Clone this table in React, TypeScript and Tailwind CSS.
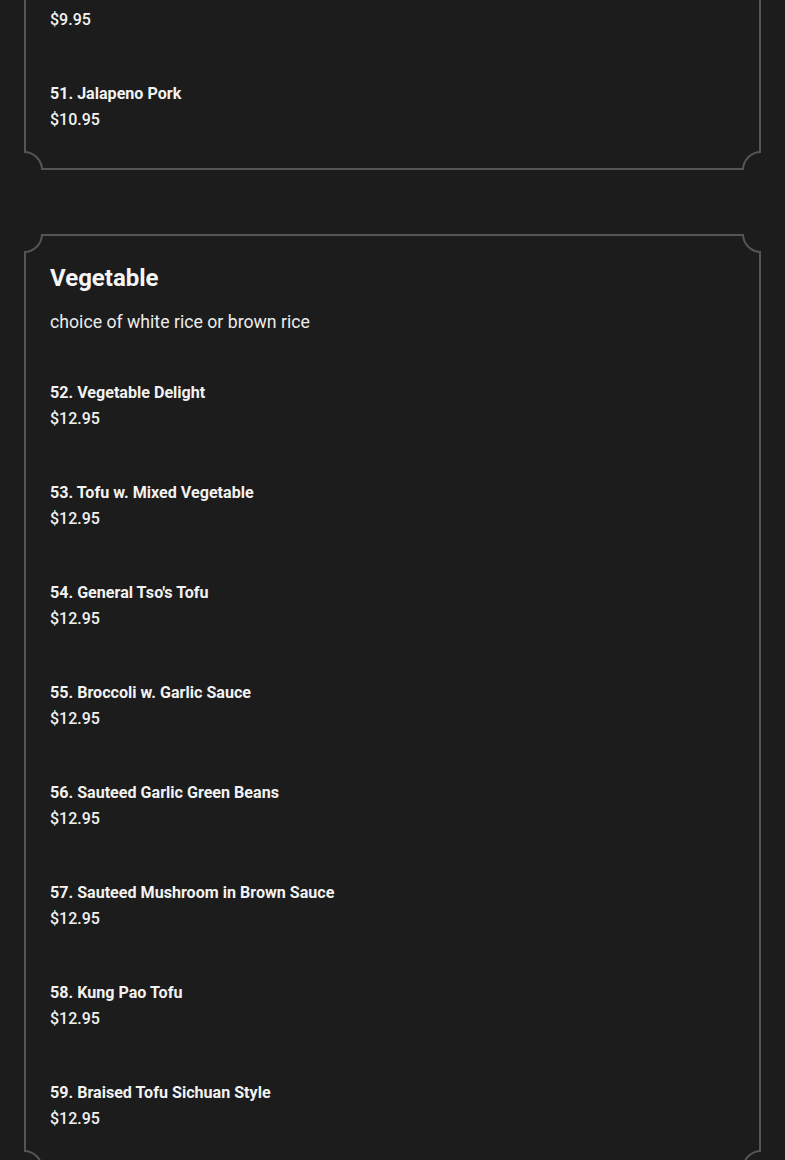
import React from "react";

type Item = { name: string; price: string };

const Corner = ({ pos }: { pos: string }) => (
  <div
    className={`absolute w-[38px] h-[38px] rounded-full border-2 border-[#555555] bg-[#1c1c1c] ${pos}`}
  />
);

const Card = ({
  title,
  desc,
  items,
  className = "",
}: {
  title?: string;
  desc?: string;
  items: Item[];
  className?: string;
}) => (
  <section className={`relative mx-6 overflow-hidden ${className}`}>
    <div
      className={`border-2 border-[#555555] px-6 pb-[11px] ${title ? "pt-[26px]" : "pt-0"}`}
    >
      {title && (
        <h2 className="text-[24px] leading-[32px] font-bold text-[#f5f5f5]">{title}</h2>
      )}
      {desc && (
        <p className="mt-[14px] mb-[20px] text-[17.7px] leading-[28px] text-[#ececec]">{desc}</p>
      )}
      {items.map((it) => (
        <div key={it.name} className="flex flex-col gap-[2px] py-[25px]">
          <div className="text-[16.1px] leading-[24px] font-bold text-[#f2f2f2]">{it.name}</div>
          <div className="text-[16px] leading-[24px] font-medium text-[#f2f2f2]">{it.price}</div>
        </div>
      ))}
    </div>
    <Corner pos="-left-[19px] -top-[19px]" />
    <Corner pos="-right-[19px] -top-[19px]" />
    <Corner pos="-left-[19px] -bottom-[19px]" />
    <Corner pos="-right-[19px] -bottom-[19px]" />
  </section>
);

export default function App() {
  const veg: Item[] = [
    { name: "52. Vegetable Delight", price: "$12.95" },
    { name: "53. Tofu w. Mixed Vegetable", price: "$12.95" },
    { name: "54. General Tso's Tofu", price: "$12.95" },
    { name: "55. Broccoli w. Garlic Sauce", price: "$12.95" },
    { name: "56. Sauteed Garlic Green Beans", price: "$12.95" },
    { name: "57. Sauteed Mushroom in Brown Sauce", price: "$12.95" },
    { name: "58. Kung Pao Tofu", price: "$12.95" },
    { name: "59. Braised Tofu Sichuan Style", price: "$12.95" },
  ];
  return (
    <div
      className="min-h-[1160px] bg-[#1c1c1c] overflow-hidden"
      style={{ fontFamily: "Roboto, 'Noto Sans', sans-serif" }}
    >
      <Card
        className="mt-[-45px]"
        items={[
          { name: "50. Pork w. Broccoli", price: "$9.95" },
          { name: "51. Jalapeno Pork", price: "$10.95" },
        ]}
      />
      <Card
        className="mt-[64px]"
        title="Vegetable"
        desc="choice of white rice or brown rice"
        items={veg}
      />
    </div>
  );
}
